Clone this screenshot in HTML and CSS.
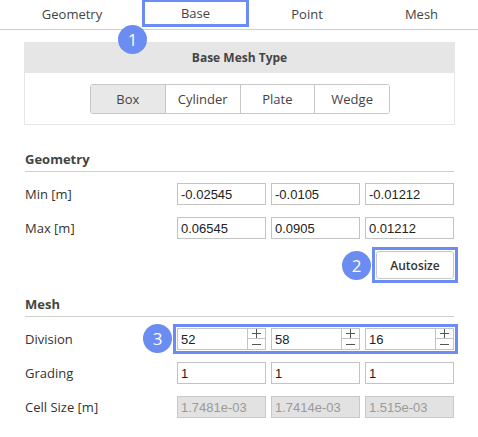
FILE: index.html
```html
<!DOCTYPE html>
<html lang="en">
<head>
<meta charset="utf-8">
<title>Base Mesh</title>
<link rel="stylesheet" href="styles.css">
</head>
<body>
<div class="tabs">
  <div class="tab t1">Geometry</div>
  <div class="tab t2 active">Base<span class="badge b1">1</span></div>
  <div class="tab t3">Point</div>
  <div class="tab t4">Mesh</div>
</div>

<div class="panel">
  <div class="panel-head">Base Mesh Type</div>
  <div class="panel-body">
    <div class="seg">
      <button class="seg-btn on">Box</button>
      <button class="seg-btn">Cylinder</button>
      <button class="seg-btn">Plate</button>
      <button class="seg-btn">Wedge</button>
    </div>
  </div>
</div>

<section class="sec geo">
  <h3 class="sec-title">Geometry</h3>
  <div class="rows">
    <div class="row">
      <span class="label">Min [m]</span>
      <div class="trio">
        <input class="field" value="-0.02545">
        <input class="field" value="-0.0105">
        <input class="field" value="-0.01212">
      </div>
    </div>
    <div class="row">
      <span class="label">Max [m]</span>
      <div class="trio">
        <input class="field" value="0.06545">
        <input class="field" value="0.0905">
        <input class="field" value="0.01212">
      </div>
    </div>
  </div>
  <div class="actions">
    <span class="badge b2">2</span>
    <span class="hl-box"><button class="autosize">Autosize</button></span>
  </div>
</section>

<section class="sec mesh">
  <h3 class="sec-title">Mesh</h3>
  <div class="rows">
    <div class="row">
      <span class="label">Division</span>
      <div class="trio hl">
        <span class="badge b3">3</span>
        <div class="spin"><input class="spin-in" value="52"><span class="arrows"><span class="arr up"><svg width="9" height="9" viewBox="0 0 9 9"><path d="M0 4.5H9M4.5 0V9" stroke="#555" stroke-width="1"/></svg></span><span class="arr dn"><svg width="9" height="9" viewBox="0 0 9 9"><path d="M0 4.5H9" stroke="#555" stroke-width="1"/></svg></span></span></div>
        <div class="spin"><input class="spin-in" value="58"><span class="arrows"><span class="arr up"><svg width="9" height="9" viewBox="0 0 9 9"><path d="M0 4.5H9M4.5 0V9" stroke="#555" stroke-width="1"/></svg></span><span class="arr dn"><svg width="9" height="9" viewBox="0 0 9 9"><path d="M0 4.5H9" stroke="#555" stroke-width="1"/></svg></span></span></div>
        <div class="spin"><input class="spin-in" value="16"><span class="arrows"><span class="arr up"><svg width="9" height="9" viewBox="0 0 9 9"><path d="M0 4.5H9M4.5 0V9" stroke="#555" stroke-width="1"/></svg></span><span class="arr dn"><svg width="9" height="9" viewBox="0 0 9 9"><path d="M0 4.5H9" stroke="#555" stroke-width="1"/></svg></span></span></div>
      </div>
    </div>
    <div class="row">
      <span class="label">Grading</span>
      <div class="trio">
        <input class="field" value="1">
        <input class="field" value="1">
        <input class="field" value="1">
      </div>
    </div>
    <div class="row">
      <span class="label">Cell Size [m]</span>
      <div class="trio">
        <input class="field" value="1.7481e-03" disabled>
        <input class="field" value="1.7414e-03" disabled>
        <input class="field" value="1.515e-03" disabled>
      </div>
    </div>
  </div>
</section>
</body>
</html>
```

FILE: styles.css
```css
* { box-sizing: border-box; }
html, body { margin: 0; padding: 0; background: #fff; }
body {
  width: 478px;
  height: 437px;
  overflow: hidden;
  font-family: "Open Sans", "Noto Sans", sans-serif;
  font-size: 13px;
  color: #3a3a3a;
}

/* tabs */
.tabs {
  display: flex;
  align-items: flex-start;
  height: 30px;
  border-bottom: 1px solid #cfcfcf;
}
.tab {
  position: relative;
  height: 29px;
  padding-top: 5px;
  line-height: 18px;
  text-align: center;
  color: #444;
}
.t1 { margin-left: 14px; width: 116px; }
.t2 { margin-left: 12px; width: 107px; }
.t3 { width: 116px; }
.t4 { width: 113px; }
.tab.active {
  height: 27px;
  padding-top: 2px;
  border: 3px solid #6b8df3;
  border-top-width: 2px;
}

/* badges */
.badge {
  position: absolute;
  width: 29px;
  height: 29px;
  border-radius: 50%;
  background: #6b8cf0;
  color: #fff;
  font-family: "Open Sans", sans-serif;
  font-size: 17px;
  line-height: 29px;
  text-align: center;
  z-index: 5;
}
.b1 { left: -27px; top: 23px; }
.b2 { position: static; flex: none; margin-right: 1px; }
.b3 { left: -34px; top: -4px; }

/* base mesh panel */
.panel {
  margin: 12px 0 0 24px;
  width: 431px;
}
.panel-head {
  height: 31px;
  background: #e6e6e6;
  text-align: center;
  font-weight: 700;
  font-size: 12px;
  line-height: 31px;
  color: #444;
}
.panel-body {
  border: 1px solid #e6e6e6;
  border-top: none;
  padding: 11px 0 10px;
  display: flex;
  justify-content: center;
}
.seg {
  display: flex;
  width: 300px;
  height: 30px;
  border: 1px solid #c6c6c6;
  border-radius: 3px;
  overflow: hidden;
  margin-left: 1px;
}
.seg-btn {
  flex: 1;
  margin: 0;
  padding: 0;
  border: none;
  border-left: 1px solid #c6c6c6;
  background: #fff;
  font-family: "Open Sans", sans-serif;
  font-size: 13px;
  color: #444;
}
.seg-btn:first-child { border-left: none; }
.seg-btn.on { background: #e8e8e8; }

/* sections */
.sec {
  margin-left: 25px;
  width: 429px;
}
.sec-title {
  margin: 0;
  height: 23px;
  padding-bottom: 2px;
  line-height: 20px;
  font-size: 13px;
  font-weight: 700;
  color: #444;
  border-bottom: 1px solid #cfcfcf;
}
.geo .sec-title { margin-top: 24px; }
.mesh .sec-title { margin-top: 11px; }

.rows {
  display: flex;
  flex-direction: column;
  gap: 12px;
  margin-top: 11px;
}
.row {
  display: flex;
  align-items: center;
  height: 22px;
}
.label {
  width: 152px;
  flex: none;
  color: #333;
}
.trio {
  position: relative;
  display: grid;
  grid-template-columns: repeat(3, 89px);
  column-gap: 5px;
}
.trio.hl {
  outline: 3px solid #6b8df3;
  outline-offset: 1px;
}
.field {
  width: 89px;
  height: 22px;
  margin: 0;
  padding: 0 0 0 3px;
  border: 1px solid #c3c3c3;
  border-radius: 0;
  background: #fff;
  font-family: "Liberation Sans", Arial, sans-serif;
  font-size: 13px;
  color: #222;
  outline: none;
}
.field:disabled {
  background: #e2e2e2;
  border-color: #c8c8c8;
  color: #9a9a9a;
}
.spin {
  display: flex;
  width: 89px;
  height: 22px;
  border: 1px solid #c3c3c3;
  background: #fff;
}
.spin-in {
  flex: 1;
  min-width: 0;
  height: 20px;
  margin: 0;
  padding: 0 0 0 3px;
  border: none;
  font-family: "Liberation Sans", Arial, sans-serif;
  font-size: 13px;
  color: #222;
  outline: none;
  background: transparent;
}
.arrows {
  display: flex;
  flex-direction: column;
  width: 18px;
  border-left: 1px solid #c3c3c3;
}
.arr {
  height: 10px;
  display: flex;
  align-items: center;
  justify-content: center;
}
.arr.up { border-bottom: 1px solid #c3c3c3; }
.arr.dn { flex: 1; }

/* autosize */
.actions {
  display: flex;
  justify-content: flex-end;
  align-items: center;
  margin-top: 8px;
  margin-right: -4px;
  height: 36px;
}
.hl-box {
  display: flex;
  padding: 1px;
  border: 3px solid #6b8df3;
}
.autosize {
  width: 78px;
  height: 28px;
  margin: 0;
  padding: 0;
  background: #fff;
  border: 1px solid #c8c8c8;
  border-radius: 3px;
  font-family: "Open Sans", sans-serif;
  font-size: 12px;
  font-weight: 600;
  color: #333;
}
```
